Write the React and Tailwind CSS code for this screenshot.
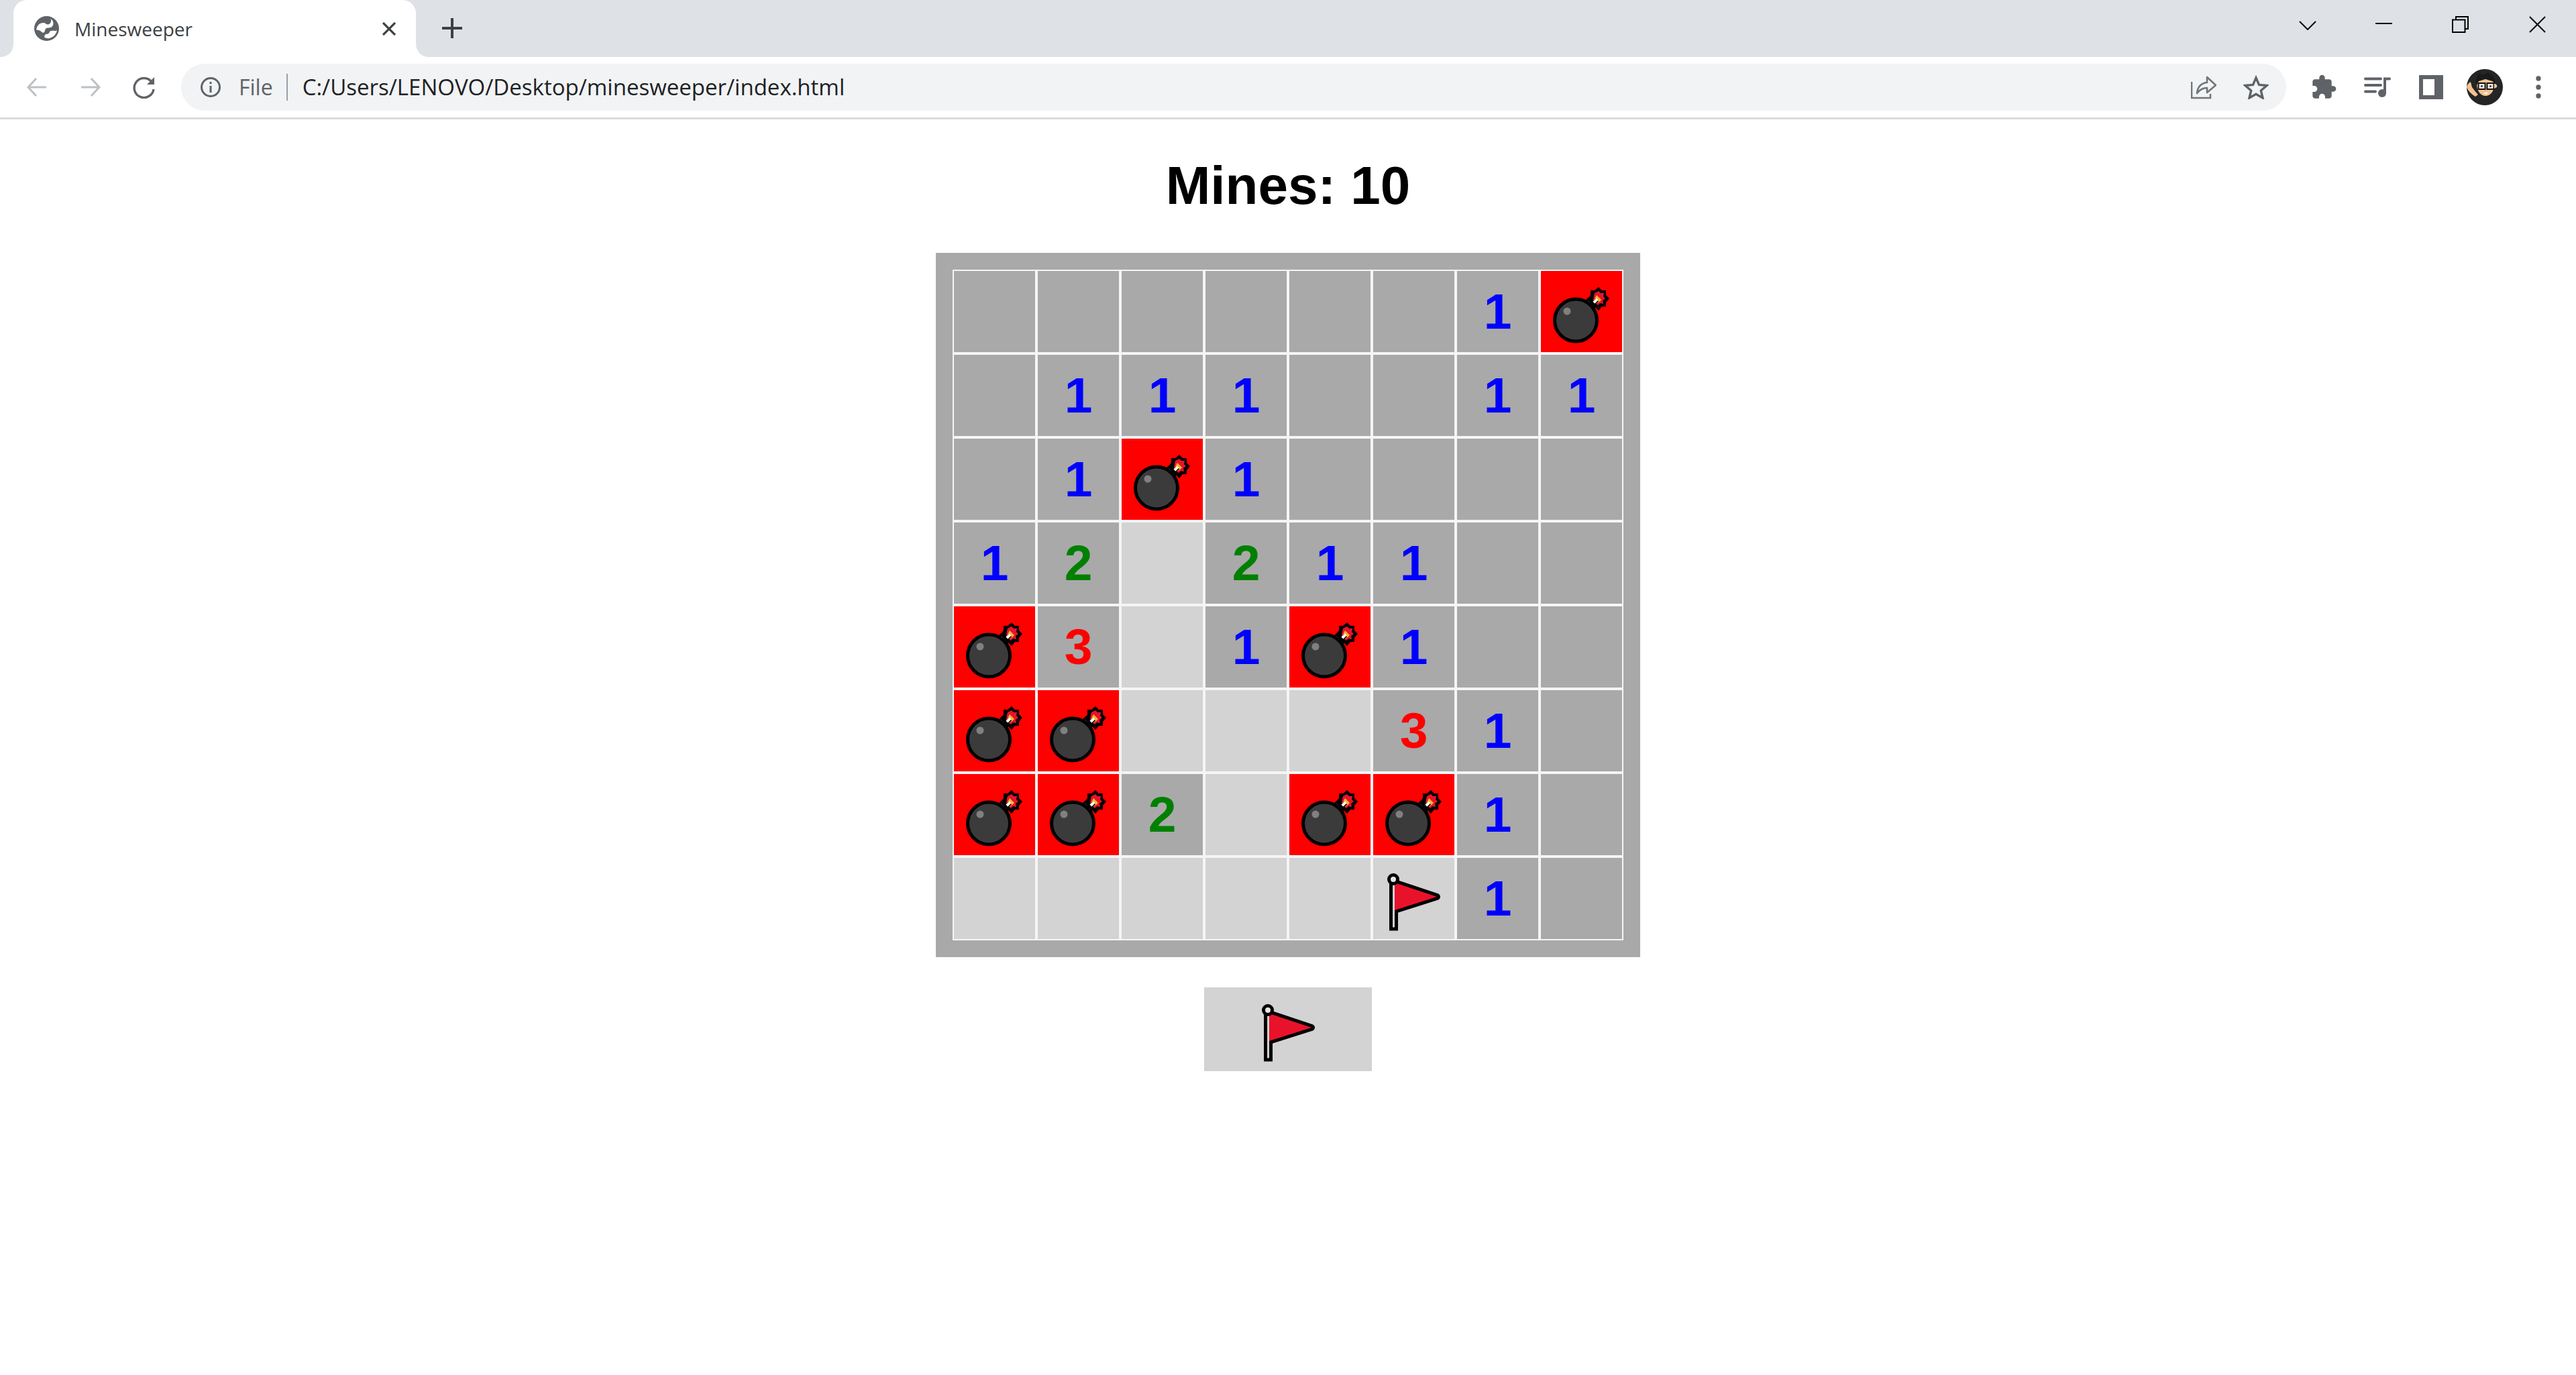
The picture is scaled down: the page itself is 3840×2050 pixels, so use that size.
import React from "react";

const sans = "font-['Open_Sans','Liberation_Sans',sans-serif]";

const BOARD = [
  ["", "", "", "", "", "", "1", "B"],
  ["", "1", "1", "1", "", "", "1", "1"],
  ["", "1", "B", "1", "", "", "", ""],
  ["1", "2", "L", "2", "1", "1", "", ""],
  ["B", "3", "L", "1", "B", "1", "", ""],
  ["B", "B", "L", "L", "L", "3", "1", ""],
  ["B", "B", "2", "L", "B", "B", "1", ""],
  ["L", "L", "L", "L", "L", "F", "1", ""],
];

const Bomb = () => (
  <svg viewBox="0 0 121 121" className="w-[121px] h-[121px]">
    <polygon points="86,24 91,29 97,29 97,36 102,41 97,47 97,53 91,53 86,59 80,53 74,53 74,47 70,41 74,36 74,29 80,29" fill="#000" />
    <polygon points="86,30 89,33 94,33 93,38 96,41 92,44 93,49 88,48 85,51 81,48 78,44 79,37 80,33" fill="#e8132a" />
    <polygon points="83,36 87,40 90,43 87,46 82,49 79,44" fill="#fdb52c" />
    <path d="M71 55 L84 43" stroke="#000" strokeWidth="6" />
    <path d="M75 51 L84 42" stroke="#fff" strokeWidth="4" />
    <rect x="62" y="43" width="18" height="19" fill="#000" transform="rotate(45 71 52)" />
    <rect x="65" y="47" width="12" height="10" fill="#7c7c7c" transform="rotate(45 71 52)" />
    <circle cx="52" cy="73.5" r="31.5" fill="#3b3b3b" stroke="#000" strokeWidth="5" />
    <circle cx="39" cy="60" r="5.5" fill="#808080" />
  </svg>
);

const Flag = () => (
  <svg viewBox="0 0 121 121" className="w-[121px] h-[121px]">
    <polygon points="32,37 95,58 32,78" fill="#000" stroke="#000" strokeWidth="10" strokeLinejoin="round" />
    <rect x="26.5" y="34" width="8" height="72" fill="#d0d0d0" stroke="#000" strokeWidth="5" />
    <polygon points="32,37 95,58 32,78" fill="#e8132a" />
    <circle cx="30" cy="32" r="6.5" fill="#e6e6e6" stroke="#000" strokeWidth="5" />
  </svg>
);

const Cell = ({ value }) => {
  const revealed = value === "L" || value === "F";
  const mine = value === "B";
  const bg = mine ? "bg-[#ff0000]" : revealed ? "bg-[#d3d3d3]" : "bg-[#a9a9a9]";
  const color =
    value === "1" ? "text-[#0000ff]" : value === "2" ? "text-[#008000]" : "text-[#ff0000]";
  return (
    <div className={`w-[125px] h-[125px] border-2 border-[#f5f5f5] flex items-center justify-center ${bg}`}>
      {mine && <Bomb />}
      {value === "F" && <Flag />}
      {["1", "2", "3"].includes(value) && <span className={color}>{value}</span>}
    </div>
  );
};

const TabBar = () => (
  <div className="h-[85px] bg-[#dee1e6] flex items-end pl-[20px]">
    <div className="relative w-[600px] h-[85px] bg-white rounded-t-[20px] flex items-center pl-[31px]">
      <svg viewBox="0 0 20 20" className="absolute left-[-20px] bottom-0 w-[20px] h-[20px]">
        <path d="M20 0 V20 H0 C12 20 20 12 20 0Z" fill="#fff" />
      </svg>
      <svg viewBox="0 0 20 20" className="absolute right-[-20px] bottom-0 w-[20px] h-[20px]">
        <path d="M0 0 V20 H20 C8 20 0 12 0 0Z" fill="#fff" />
      </svg>
      <svg viewBox="0 0 36 36" className="w-[37px] h-[37px] shrink-0">
        <circle cx="18" cy="18" r="18" fill="#5f6368" />
        <path d="M3 20 C4 13 9 9 15 10 C17 11 19 13 21 12 C24 11 25 8 24 4 C28 7 29 12 26 15 C23 18 19 16 17 18 C15 20 16 24 13 24 C10 24 10 20 3 20Z" fill="#fff" />
        <path d="M15 31 C14 28 16 26 19 26 C21 26 22 24 23 22 C26 20 29 22 33 21 C32 26 28 31 22 32 C20 33 17 32 15 31Z" fill="#fff" />
      </svg>
      <span className={`ml-[23px] text-[28px] text-[#3c4043] ${sans}`}>Minesweeper</span>
      <svg viewBox="0 0 20 20" className="absolute right-[30px] top-[33px] w-[20px] h-[20px]">
        <path d="M1 1 L19 19 M19 1 L1 19" stroke="#3c4043" strokeWidth="3.2" />
      </svg>
    </div>
    <div className="h-[85px] flex items-center ml-[39px]">
      <svg viewBox="0 0 30 30" className="w-[30px] h-[30px] -mt-[1px]">
        <path d="M15 0 V30 M0 15 H30" stroke="#3c4043" strokeWidth="4" />
      </svg>
    </div>
    <div className="ml-auto h-[85px] flex items-center">
      <div className="w-[115px] flex justify-center">
        <svg viewBox="0 0 26 14" className="w-[26px] h-[14px] -mt-[10px]">
          <path d="M1 1 L13 13 L25 1" fill="none" stroke="#000" strokeWidth="2" />
        </svg>
      </div>
      <div className="w-[113px] flex justify-center">
        <div className="w-[25px] h-[2px] bg-black mb-[15px]" />
      </div>
      <div className="w-[115px] flex justify-center">
        <svg viewBox="0 0 25 25" className="w-[25px] h-[25px] -mt-[13px]">
          <rect x="1" y="5.5" width="18.5" height="18.5" fill="none" stroke="#000" strokeWidth="2" />
          <path d="M6 5 V1 H24 V19 H20" fill="none" stroke="#000" strokeWidth="2" />
        </svg>
      </div>
      <div className="w-[115px] flex justify-center">
        <svg viewBox="0 0 25 25" className="w-[25px] h-[25px] -mt-[13px]">
          <path d="M1 1 L24 24 M24 1 L1 24" stroke="#000" strokeWidth="2" />
        </svg>
      </div>
    </div>
  </div>
);

const IconBox = ({ children }) => (
  <div className="w-[80px] h-[70px] flex items-center justify-center shrink-0">{children}</div>
);

const Avatar = () => (
  <svg viewBox="0 0 54 54" className="w-[54px] h-[54px]">
    <circle cx="27" cy="27" r="27" fill="#252525" />
    <path d="M0 27 C1 22 4 21 5 19 C7 20 7 24 8 27 C11 31 14 35 17 38 L13 41 C8 38 3 34 0 27Z" fill="#f2c391" />
    <path d="M15 24 C15 17 21 14 28 14 C37 14 42 19 41 26 C40 34 35 40 28 40 C21 40 16 33 15 24Z" fill="#f2c391" />
    <path d="M13 18 L18 6 L24 9 L32 5 L40 12 L43 21 L38 18 L28 15 L18 18 L15 24Z" fill="#1a1a1a" />
    <rect x="17.5" y="21" width="10" height="9" fill="#e8e8e8" stroke="#111" strokeWidth="2" />
    <rect x="30.5" y="21" width="10" height="9" fill="#e8e8e8" stroke="#111" strokeWidth="2" />
    <circle cx="22.5" cy="25.5" r="1.5" fill="#333" />
    <circle cx="35.5" cy="25.5" r="1.5" fill="#333" />
    <path d="M25 35 H32 L29 38Z" fill="#fff" />
    <path d="M41 22 C44 22 46 24 45 27 L41 29Z" fill="#f2c391" />
  </svg>
);

const Toolbar = () => (
  <div className="h-[93px] bg-white border-b-[3px] border-[#dadce0] flex items-start pt-[10px] pl-[15px]">
    <IconBox>
      <svg viewBox="0 0 32 32" className="w-[32px] h-[32px]">
        <path d="M30 16 H3 M15 3 L3 16 L15 29" fill="none" stroke="#bdc1c6" strokeWidth="3" />
      </svg>
    </IconBox>
    <IconBox>
      <svg viewBox="0 0 32 32" className="w-[32px] h-[32px]">
        <path d="M2 16 H29 M17 3 L29 16 L17 29" fill="none" stroke="#bdc1c6" strokeWidth="3" />
      </svg>
    </IconBox>
    <IconBox>
      <svg viewBox="0 0 34 34" className="w-[34px] h-[34px]">
        <path d="M28 9 A14.5 14.5 0 1 0 31 20" fill="none" stroke="#5f6368" strokeWidth="3.4" />
        <path d="M32 2 V13 H21Z" fill="#5f6368" />
      </svg>
    </IconBox>
    <div className="ml-[15px] h-[70px] w-[3138px] bg-[#f1f3f4] rounded-full flex items-center pl-[28px] pr-[26px] shrink-0">
      <svg viewBox="0 0 32 32" className="w-[32px] h-[32px] shrink-0">
        <circle cx="16" cy="16" r="13.5" fill="none" stroke="#5f6368" strokeWidth="3" />
        <rect x="14.5" y="14" width="3" height="10" fill="#5f6368" />
        <rect x="14.5" y="8" width="3" height="3.2" fill="#5f6368" />
      </svg>
      <span className={`ml-[26px] text-[32px] text-[#5f6368] ${sans}`}>File</span>
      <div className="ml-[20px] w-[2px] h-[40px] bg-[#9aa0a6]" />
      <span className={`ml-[22px] text-[33px] text-[#202124] ${sans}`}>C:/Users/LENOVO/Desktop/minesweeper/index.html</span>
      <div className="ml-auto flex items-center gap-[40px]">
        <svg viewBox="0 0 38 36" className="w-[38px] h-[36px]">
          <path d="M1 10 V34 H29 V28" fill="none" stroke="#70757a" strokeWidth="2.6" />
          <path d="M9 27 C10 17 15 12 24 11 V3 L37 15 L24 26 V19 C18 19 13 22 9 27Z" fill="none" stroke="#70757a" strokeWidth="2.6" strokeLinejoin="round" />
        </svg>
        <svg viewBox="0 0 38 36" className="w-[38px] h-[36px]">
          <polygon points="19,4 23.5,14.5 35,15.5 26.3,23 29,34 19,28.2 9,34 11.7,23 3,15.5 14.5,14.5" fill="none" stroke="#5f6368" strokeWidth="3.4" />
        </svg>
      </div>
    </div>
    <div className="ml-[16px] flex">
      <IconBox>
        <svg viewBox="0 0 24 24" className="w-[40px] h-[40px]">
          <path d="M20.5 11H19V7c0-1.1-.9-2-2-2h-4V3.5C13 2.12 11.88 1 10.5 1S8 2.12 8 3.5V5H4c-1.1 0-1.99.9-1.99 2v3.8H3.5c1.49 0 2.7 1.21 2.7 2.7s-1.21 2.7-2.7 2.7H2V20c0 1.1.9 2 2 2h3.8v-1.5c0-1.49 1.21-2.7 2.7-2.7 1.49 0 2.7 1.21 2.7 2.7V22H17c1.1 0 2-.9 2-2v-4h1.5c1.38 0 2.5-1.12 2.5-2.5S21.88 11 20.5 11z" fill="#5f6368" />
        </svg>
      </IconBox>
      <IconBox>
        <svg viewBox="0 0 40 30" className="w-[40px] h-[30px]">
          <path d="M2 2.5 H25 M2 12 H25 M2 21.5 H17" stroke="#5f6368" strokeWidth="4" strokeLinecap="round" fill="none" />
          <path d="M31 23 V2.5 H38" stroke="#5f6368" strokeWidth="4" strokeLinecap="round" fill="none" />
          <circle cx="27" cy="24" r="6" fill="#5f6368" />
        </svg>
      </IconBox>
      <IconBox>
        <svg viewBox="0 0 36 36" className="w-[36px] h-[36px]">
          <path fillRule="evenodd" d="M0 0 H36 V36 H0Z M6 6 V30 H23 V6Z" fill="#5f6368" />
        </svg>
      </IconBox>
      <IconBox>
        <Avatar />
      </IconBox>
      <IconBox>
        <svg viewBox="0 0 8 34" className="w-[8px] h-[34px]">
          <circle cx="4" cy="4" r="3.7" fill="#5f6368" />
          <circle cx="4" cy="17" r="3.7" fill="#5f6368" />
          <circle cx="4" cy="30" r="3.7" fill="#5f6368" />
        </svg>
      </IconBox>
    </div>
  </div>
);

export default function App() {
  return (
    <div className="w-full min-h-[2050px] bg-white font-['Liberation_Sans',Arial,sans-serif]">
      <TabBar />
      <Toolbar />
      <div className="flex flex-col items-center pt-[54px]">
        <h1 className="text-[80px] leading-[90px] font-bold text-black">Mines: 10</h1>
        <div className="mt-[55px] p-[25px] bg-[#a9a9a9]">
          <div className="grid grid-cols-[repeat(8,125px)] text-[75px] font-bold leading-none">
            {BOARD.map((row, r) =>
              row.map((value, c) => <Cell key={`${r}-${c}`} value={value} />)
            )}
          </div>
        </div>
        <button className="mt-[45px] w-[250px] h-[125px] bg-[#d3d3d3] flex items-center justify-center">
          <Flag />
        </button>
      </div>
    </div>
  );
}
